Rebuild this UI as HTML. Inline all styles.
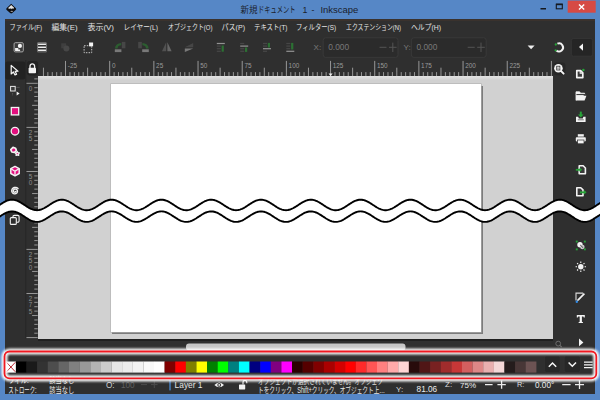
<!DOCTYPE html>
<html lang="ja"><head><meta charset="utf-8"><title>新規ドキュメント 1 - Inkscape</title>
<style>
html,body{margin:0;padding:0}
body{width:600px;height:400px;position:relative;overflow:hidden;background:#5687c6;font-family:"Liberation Sans",sans-serif}
#app{position:absolute;left:0;top:0;width:600px;height:400px;overflow:hidden}
#app>div{position:absolute}
#ov{position:absolute;left:0;top:0}
#ov text{font-family:"Liberation Sans",sans-serif}
#ov text.j{font-family:"Liberation Sans","Noto Sans CJK JP",sans-serif}
.t{position:absolute;color:transparent;white-space:nowrap;overflow:hidden;line-height:1;font-family:"Liberation Sans",sans-serif;user-select:none}
</style></head><body>
<div id="app">
<div style="left:5.2px;top:19.2px;width:589.6px;height:375.3px;background:#2f2f2f;"></div>
<div style="left:5.2px;top:19.2px;width:589.6px;height:1.6px;background:#3a322d;"></div>
<div style="left:37.7px;top:76.1px;width:515.3px;height:262.7px;background:#d1d1d1;"></div>
<div style="left:37.7px;top:338.8px;width:515.3px;height:1.8px;background:#1f1f1f;"></div>
<div style="left:37.7px;top:76.1px;width:515.3px;height:4px;background:linear-gradient(#e4e4e4,#d1d1d1);"></div>
<div style="left:112.4px;top:85.8px;width:370.4px;height:248.4px;background:#7c7c7c;filter:blur(0.7px);"></div>
<div style="left:110.7px;top:83.6px;width:370.3px;height:248.5px;background:#ffffff;box-shadow:0 0 0 0.6px #b0b0b0;"></div>
<span class="t" style="left:240px;top:5px;font-size:8.8px;width:119px">新規ドキュメント 1 - Inkscape</span>
<span class="t" style="left:9.5px;top:22.9px;font-size:7.5px;width:32.5px">ファイル(F)</span>
<span class="t" style="left:51.5px;top:22.9px;font-size:7.5px;width:26.0px">編集(E)</span>
<span class="t" style="left:87.5px;top:22.9px;font-size:7.5px;width:26.5px">表示(V)</span>
<span class="t" style="left:123.5px;top:22.9px;font-size:7.5px;width:34.5px">レイヤー(L)</span>
<span class="t" style="left:168.0px;top:22.9px;font-size:7.5px;width:44.5px">オブジェクト(O)</span>
<span class="t" style="left:221.5px;top:22.9px;font-size:7.5px;width:23.5px">パス(P)</span>
<span class="t" style="left:254.0px;top:22.9px;font-size:7.5px;width:33.5px">テキスト(T)</span>
<span class="t" style="left:296.0px;top:22.9px;font-size:7.5px;width:40.0px">フィルター(S)</span>
<span class="t" style="left:346.0px;top:22.9px;font-size:7.5px;width:55.0px">エクステンション(N)</span>
<span class="t" style="left:411.0px;top:22.9px;font-size:7.5px;width:30.0px">ヘルプ(H)</span>
<span class="t" style="left:8.6px;top:374.4px;font-size:8.4px;width:20.0px">フィル:</span>
<span class="t" style="left:49.2px;top:374.4px;font-size:8.4px;width:25.0px">該当なし</span>
<span class="t" style="left:8.2px;top:384.4px;font-size:8.4px;width:28.3px">ストローク:</span>
<span class="t" style="left:49.2px;top:384.4px;font-size:8.4px;width:25.0px">該当なし</span>
<span class="t" style="left:258.0px;top:375.5px;font-size:8.2px;width:125.0px">オブジェクトが選択されていません。オブジェク</span>
<span class="t" style="left:258.0px;top:384.5px;font-size:8.2px;width:127.0px">トをクリック、Shift+クリック、オブジェクト上…</span>
<svg id="ov" width="600" height="400" viewBox="0 0 600 400">
<defs><filter id="bl" x="-5%" y="-50%" width="110%" height="200%"><feGaussianBlur stdDeviation="0.85"/></filter></defs>
<g transform="translate(11.2 8.7) scale(0.9)"><path d="M0 -5.6 L5.2 -0.6 Q6 0.6 5 1.4 L1.2 4.8 Q0 5.8 -1.2 4.8 L-5 1.4 Q-6 0.6 -5.2 -0.6 Z" fill="#0e0e10"/><path d="M0 -4.2 L3.2 -1 L2.2 0.2 L1 -0.6 L0 0.6 L-1 -0.6 L-2.4 0.4 L-3.4 -0.8 Z" fill="#e4e4e4"/><ellipse cx="0.6" cy="3" rx="1.4" ry="0.6" fill="#cfcfcf" opacity="0.7"/></g>
<text class="j" x="240.5" y="13.2" font-size="8.8" fill="#1a212c" textLength="17" lengthAdjust="spacingAndGlyphs">新規</text>
<text class="j" x="258" y="13.2" font-size="8.8" fill="#1a212c" textLength="37.5" lengthAdjust="spacingAndGlyphs">ドキュメント</text>
<text class="j" x="302.6" y="13.2" font-size="8.8" fill="#1a212c">1</text>
<text class="j" x="311.6" y="13.2" font-size="8.8" fill="#1a212c">-</text>
<text class="j" x="320.4" y="13.2" font-size="8.8" fill="#1a212c" textLength="38" lengthAdjust="spacingAndGlyphs">Inkscape</text>
<rect x="540.5" y="8" width="5.5" height="1.5" fill="#15191f" />
<rect x="556.3" y="4.2" width="6" height="4.6" fill="none" stroke="#15191f" stroke-width="1.1"/><rect x="556" y="3.7" width="6.6" height="1.5" fill="#15191f"/>
<rect x="567.7" y="0.6" width="28" height="12.1" fill="#d64a44" />
<path d="M579 4.6 L584.2 9.6 M584.2 4.6 L579 9.6" stroke="#ffffff" stroke-width="1.4" fill="none"/>
<text class="j" x="9.5" y="30.4" font-size="7.5" fill="#e4e4e4" textLength="32.5" lengthAdjust="spacingAndGlyphs">ファイル(F)</text>
<text class="j" x="51.5" y="30.4" font-size="7.5" fill="#e4e4e4" textLength="26" lengthAdjust="spacingAndGlyphs">編集(E)</text>
<text class="j" x="87.5" y="30.4" font-size="7.5" fill="#e4e4e4" textLength="26.5" lengthAdjust="spacingAndGlyphs">表示(V)</text>
<text class="j" x="123.5" y="30.4" font-size="7.5" fill="#e4e4e4" textLength="34.5" lengthAdjust="spacingAndGlyphs">レイヤー(L)</text>
<text class="j" x="168" y="30.4" font-size="7.5" fill="#e4e4e4" textLength="44.5" lengthAdjust="spacingAndGlyphs">オブジェクト(O)</text>
<text class="j" x="221.5" y="30.4" font-size="7.5" fill="#e4e4e4" textLength="23.5" lengthAdjust="spacingAndGlyphs">パス(P)</text>
<text class="j" x="254" y="30.4" font-size="7.5" fill="#e4e4e4" textLength="33.5" lengthAdjust="spacingAndGlyphs">テキスト(T)</text>
<text class="j" x="296" y="30.4" font-size="7.5" fill="#e4e4e4" textLength="40" lengthAdjust="spacingAndGlyphs">フィルター(S)</text>
<text class="j" x="346" y="30.4" font-size="7.5" fill="#e4e4e4" textLength="55" lengthAdjust="spacingAndGlyphs">エクステンション(N)</text>
<text class="j" x="411" y="30.4" font-size="7.5" fill="#e4e4e4" textLength="30" lengthAdjust="spacingAndGlyphs">ヘルプ(H)</text>
<g transform="translate(18.7 47.3)"><rect x="-4.6" y="-4.6" width="9.2" height="9.2" rx="1.2" fill="#3a3a3a" stroke="#a8a8a8" stroke-width="1"/><circle cx="1.2" cy="-1.4" r="2.1" fill="#f4f4f4"/><path d="M-3.6 0.6h3.2v1.6h1.8v1.6h-5z" fill="#f0f0f0"/></g>
<g transform="translate(42 47.3)"><path d="M-4 -3H4M-4 0H4M-4 3H4" stroke="#ededed" stroke-width="1.5"/><path d="M-4.4 -4.4V4.4M4.4 -4.4V4.4M-4.4 -4.6H4.4M-4.4 4.6H4.4" stroke="#8a8a8a" stroke-width="0.8" fill="none"/></g>
<g transform="translate(65.2 47.3)"><rect x="-4" y="-4" width="5" height="5" fill="#3f3f3f"/><circle cx="1.2" cy="1.2" r="3" fill="#474747"/></g>
<g transform="translate(88.3 47.3)"><rect x="-4.2" y="-1.6" width="7.6" height="7" fill="none" stroke="#d6d6d6" stroke-width="0.9" stroke-dasharray="1.5 1.2"/><rect x="0.8" y="-4.8" width="4" height="3.8" fill="#f4f4f4"/></g>
<g transform="translate(120 47.3)" opacity="0.78"><path d="M1.2 -4.4 V-2 A3.6 3.4 0 0 0 -2.4 1.2 H-5 A6.2 5.6 0 0 1 1.2 -4.4Z" fill="#2c6b31"/><rect x="1.8" y="-5.4" width="3.6" height="6.4" fill="#4e4e4e"/><rect x="-5.2" y="2" width="6.6" height="2.8" fill="#8e8e8e"/></g>
<g transform="translate(143.6 47.3)" opacity="0.78"><path d="M-1.2 -4.4 V-2 A3.6 3.4 0 0 1 2.4 1.2 H5 A6.2 5.6 0 0 0 -1.2 -4.4Z" fill="#2c6b31"/><rect x="-5.4" y="-5.4" width="3.6" height="6.4" fill="#4e4e4e"/><rect x="-1.4" y="2" width="6.6" height="2.8" fill="#8e8e8e"/></g>
<g transform="translate(166.8 47.3)" opacity="0.8"><path d="M-0.6 -5 V4 H-4.8 Z" fill="#5a5a5a"/><path d="M0.6 -5 V4 H4.8 Z" fill="#747474"/></g>
<g transform="translate(189.6 47.6)" opacity="0.8"><path d="M-4.8 -0.4 H3.6 V-4.6 Z" fill="#4c4c4c"/><path d="M-4.8 0.8 H3.6 L-4.8 4.4 Z" fill="#8c8c8c"/></g>
<g transform="translate(220.8 47.3)" opacity="0.72"><rect x="-4" y="-4.3999999999999995" width="8" height="1.2" fill="#b8b8b8"/><rect x="-4" y="-1.7999999999999998" width="4" height="1.2" fill="#505050"/><rect x="-4" y="0.7999999999999999" width="4" height="1.2" fill="#505050"/><rect x="-4" y="3.4" width="4" height="1.2" fill="#505050"/><rect x="0.8" y="-1.8" width="2.2" height="6.2" fill="#2b8a35"/></g>
<g transform="translate(244.2 47.3)" opacity="0.72"><rect x="-4" y="-4.3999999999999995" width="4" height="1.2" fill="#505050"/><rect x="-4" y="-1.7999999999999998" width="8" height="1.2" fill="#b8b8b8"/><rect x="-4" y="0.7999999999999999" width="4" height="1.2" fill="#505050"/><rect x="-4" y="3.4" width="4" height="1.2" fill="#505050"/><rect x="0.8" y="0.2" width="2.2" height="4.4" fill="#2b8a35"/></g>
<g transform="translate(267 47.3)" opacity="0.72"><rect x="-4" y="-4.3999999999999995" width="4" height="1.2" fill="#505050"/><rect x="-4" y="-1.7999999999999998" width="4" height="1.2" fill="#505050"/><rect x="-4" y="0.7999999999999999" width="8" height="1.2" fill="#b8b8b8"/><rect x="-4" y="3.4" width="4" height="1.2" fill="#505050"/><rect x="0.8" y="-4.4" width="2.2" height="4.6" fill="#2b8a35"/></g>
<g transform="translate(290.3 47.3)" opacity="0.72"><rect x="-4" y="-4.3999999999999995" width="4" height="1.2" fill="#505050"/><rect x="-4" y="-1.7999999999999998" width="4" height="1.2" fill="#505050"/><rect x="-4" y="0.7999999999999999" width="4" height="1.2" fill="#505050"/><rect x="-4" y="3.4" width="8" height="1.2" fill="#b8b8b8"/><rect x="0.8" y="-4.4" width="2.2" height="6.6" fill="#2b8a35"/></g>
<text x="313.6" y="50" font-size="8" fill="#7a7a7a" font-weight="normal" text-anchor="start">X:</text>
<rect x="323.2" y="37.8" width="74.8" height="19.6" rx="2.5" fill="#2b2b2b" stroke="#3c3c3c" stroke-width="0.8"/>
<text x="328.2" y="50.2" font-size="8.4" fill="#787878" font-weight="normal" text-anchor="start">0.000</text>
<path d="M379.5 47.3h7M389.0 47.3h7.6M392.8 42.6v9.4" stroke="#545454" stroke-width="1" fill="none"/>
<text x="403.5" y="50" font-size="8" fill="#7a7a7a" font-weight="normal" text-anchor="start">Y:</text>
<rect x="411.4" y="37.8" width="74.8" height="19.6" rx="2.5" fill="#2b2b2b" stroke="#3c3c3c" stroke-width="0.8"/>
<text x="416.4" y="50.2" font-size="8.4" fill="#787878" font-weight="normal" text-anchor="start">0.000</text>
<path d="M467.7 47.3h7M477.2 47.3h7.6M481.0 42.6v9.4" stroke="#545454" stroke-width="1" fill="none"/>
<path d="M527.6 45.4h7l-3.5 3.8z" fill="#f0f0f0"/>
<g transform="translate(559 47.4)"><path d="M-1.6 -3.7 A4 4 0 1 1 -2.6 3" fill="none" stroke="#f2f2f2" stroke-width="2"/><circle cx="-3.2" cy="-2.9" r="1.15" fill="#27a338"/><circle cx="-3.4" cy="2.9" r="1.15" fill="#27a338"/></g>
<rect x="571.3" y="38.6" width="21.4" height="17.6" rx="2" fill="#252525" stroke="#3a3a3a" stroke-width="0.7"/><path d="M583 43.4v7.4l-4-3.7z" fill="#f4f4f4"/>
<path d="M43.45 67.7V76.1M47.86 72.1V76.1M52.28 72.1V76.1M56.70 72.1V76.1M61.11 72.1V76.1M65.53 60.9V76.1M69.95 72.1V76.1M74.36 72.1V76.1M78.78 72.1V76.1M83.20 72.1V76.1M87.62 67.7V76.1M92.03 72.1V76.1M96.45 72.1V76.1M100.87 72.1V76.1M105.28 72.1V76.1M109.70 60.9V76.1M114.12 72.1V76.1M118.53 72.1V76.1M122.95 72.1V76.1M127.37 72.1V76.1M131.78 67.7V76.1M136.20 72.1V76.1M140.62 72.1V76.1M145.04 72.1V76.1M149.45 72.1V76.1M153.87 60.9V76.1M158.29 72.1V76.1M162.70 72.1V76.1M167.12 72.1V76.1M171.54 72.1V76.1M175.95 67.7V76.1M180.37 72.1V76.1M184.79 72.1V76.1M189.21 72.1V76.1M193.62 72.1V76.1M198.04 60.9V76.1M202.46 72.1V76.1M206.87 72.1V76.1M211.29 72.1V76.1M215.71 72.1V76.1M220.12 67.7V76.1M224.54 72.1V76.1M228.96 72.1V76.1M233.38 72.1V76.1M237.79 72.1V76.1M242.21 60.9V76.1M246.63 72.1V76.1M251.04 72.1V76.1M255.46 72.1V76.1M259.88 72.1V76.1M264.30 67.7V76.1M268.71 72.1V76.1M273.13 72.1V76.1M277.55 72.1V76.1M281.96 72.1V76.1M286.38 60.9V76.1M290.80 72.1V76.1M295.21 72.1V76.1M299.63 72.1V76.1M304.05 72.1V76.1M308.46 67.7V76.1M312.88 72.1V76.1M317.30 72.1V76.1M321.72 72.1V76.1M326.13 72.1V76.1M330.55 60.9V76.1M334.97 72.1V76.1M339.38 72.1V76.1M343.80 72.1V76.1M348.22 72.1V76.1M352.63 67.7V76.1M357.05 72.1V76.1M361.47 72.1V76.1M365.89 72.1V76.1M370.30 72.1V76.1M374.72 60.9V76.1M379.14 72.1V76.1M383.55 72.1V76.1M387.97 72.1V76.1M392.39 72.1V76.1M396.80 67.7V76.1M401.22 72.1V76.1M405.64 72.1V76.1M410.06 72.1V76.1M414.47 72.1V76.1M418.89 60.9V76.1M423.31 72.1V76.1M427.72 72.1V76.1M432.14 72.1V76.1M436.56 72.1V76.1M440.97 67.7V76.1M445.39 72.1V76.1M449.81 72.1V76.1M454.23 72.1V76.1M458.64 72.1V76.1M463.06 60.9V76.1M467.48 72.1V76.1M471.89 72.1V76.1M476.31 72.1V76.1M480.73 72.1V76.1M485.14 67.7V76.1M489.56 72.1V76.1M493.98 72.1V76.1M498.40 72.1V76.1M502.81 72.1V76.1M507.23 60.9V76.1M511.65 72.1V76.1M516.06 72.1V76.1M520.48 72.1V76.1M524.90 72.1V76.1M529.32 67.7V76.1M533.73 72.1V76.1M538.15 72.1V76.1M542.57 72.1V76.1M546.98 72.1V76.1M551.40 60.9V76.1" stroke="#c4c4c4" stroke-width="0.7" fill="none"/>
<path d="M328.6 73.6h4l-2 2.6z" fill="#f0f0f0"/>
<text x="67.75" y="67.9" font-size="6.4" fill="#9a9a9a" font-weight="normal" text-anchor="start">-25</text>
<text x="111.92" y="67.9" font-size="6.4" fill="#9a9a9a" font-weight="normal" text-anchor="start">0</text>
<text x="156.08999999999997" y="67.9" font-size="6.4" fill="#9a9a9a" font-weight="normal" text-anchor="start">25</text>
<text x="200.26" y="67.9" font-size="6.4" fill="#9a9a9a" font-weight="normal" text-anchor="start">50</text>
<text x="244.43" y="67.9" font-size="6.4" fill="#9a9a9a" font-weight="normal" text-anchor="start">75</text>
<text x="288.6" y="67.9" font-size="6.4" fill="#9a9a9a" font-weight="normal" text-anchor="start">100</text>
<text x="332.77" y="67.9" font-size="6.4" fill="#9a9a9a" font-weight="normal" text-anchor="start">125</text>
<text x="376.94" y="67.9" font-size="6.4" fill="#9a9a9a" font-weight="normal" text-anchor="start">150</text>
<text x="421.11" y="67.9" font-size="6.4" fill="#9a9a9a" font-weight="normal" text-anchor="start">175</text>
<text x="465.28000000000003" y="67.9" font-size="6.4" fill="#9a9a9a" font-weight="normal" text-anchor="start">200</text>
<text x="509.45000000000005" y="67.9" font-size="6.4" fill="#9a9a9a" font-weight="normal" text-anchor="start">225</text>
<path d="M34.3 78.89H37.7M26.3 83.30H37.7M34.3 87.71H37.7M34.3 92.12H37.7M34.3 96.53H37.7M34.3 100.94H37.7M32.1 105.35H37.7M34.3 109.76H37.7M34.3 114.17H37.7M34.3 118.58H37.7M34.3 122.99H37.7M26.3 127.40H37.7M34.3 131.81H37.7M34.3 136.22H37.7M34.3 140.63H37.7M34.3 145.04H37.7M32.1 149.45H37.7M34.3 153.86H37.7M34.3 158.27H37.7M34.3 162.68H37.7M34.3 167.09H37.7M26.3 171.50H37.7M34.3 175.91H37.7M34.3 180.32H37.7M34.3 184.73H37.7M34.3 189.14H37.7M32.1 193.55H37.7M34.3 197.96H37.7M34.3 202.37H37.7M34.3 206.78H37.7M34.3 222.94H37.7M32.1 227.35H37.7M34.3 231.76H37.7M34.3 236.17H37.7M34.3 240.58H37.7M34.3 244.99H37.7M26.3 249.40H37.7M34.3 253.81H37.7M34.3 258.22H37.7M34.3 262.63H37.7M34.3 267.04H37.7M32.1 271.45H37.7M34.3 275.86H37.7M34.3 280.27H37.7M34.3 284.68H37.7M34.3 289.09H37.7M26.3 293.50H37.7M34.3 297.91H37.7M34.3 302.32H37.7M34.3 306.73H37.7M34.3 311.14H37.7M32.1 315.55H37.7M34.3 319.96H37.7M34.3 324.37H37.7M34.3 328.78H37.7M34.3 333.19H37.7M26.3 337.60H37.7" stroke="#c4c4c4" stroke-width="0.7" fill="none"/>
<text x="30.5" y="90.7" text-anchor="middle" font-size="6.3" fill="#8e8e8e">0</text>
<text x="30.5" y="134.8" text-anchor="middle" font-size="6.3" fill="#8e8e8e">2</text>
<text x="30.5" y="141.2" text-anchor="middle" font-size="6.3" fill="#8e8e8e">5</text>
<text x="30.5" y="178.9" text-anchor="middle" font-size="6.3" fill="#8e8e8e">5</text>
<text x="30.5" y="185.3" text-anchor="middle" font-size="6.3" fill="#8e8e8e">0</text>
<text x="30.5" y="256.8" text-anchor="middle" font-size="6.3" fill="#8e8e8e">2</text>
<text x="30.5" y="263.2" text-anchor="middle" font-size="6.3" fill="#8e8e8e">5</text>
<text x="30.5" y="269.6" text-anchor="middle" font-size="6.3" fill="#8e8e8e">0</text>
<text x="30.5" y="300.9" text-anchor="middle" font-size="6.3" fill="#8e8e8e">2</text>
<text x="30.5" y="307.3" text-anchor="middle" font-size="6.3" fill="#8e8e8e">7</text>
<text x="30.5" y="313.7" text-anchor="middle" font-size="6.3" fill="#8e8e8e">5</text>
<rect x="25.3" y="60" width="0.9" height="278.5" fill="#262626" />
<rect x="26.8" y="61" width="11.4" height="14.6" rx="3" fill="#232323"/>
<g transform="translate(32.3 68.6)"><path d="M-2.3 -0.6V-2.4A2.3 2.4 0 0 1 2.3 -2.4V-0.6" fill="none" stroke="#f4f4f4" stroke-width="1.3"/><rect x="-3.7" y="-0.8" width="7.4" height="5.4" rx="0.8" fill="#f4f4f4"/></g>
<rect x="553.4" y="62.6" width="12" height="12.6" rx="3" fill="#262626"/>
<g transform="translate(558.4 68.2)"><circle cx="0" cy="0" r="4.3" fill="#f4f4f4"/><path d="M3 3.2L5.2 5.4" stroke="#f4f4f4" stroke-width="2" stroke-linecap="round"/><rect x="-1.7" y="-2" width="3.2" height="3.8" fill="none" stroke="#2a2a2a" stroke-width="0.75"/><path d="M-0.4 -0.8V1" stroke="#2a2a2a" stroke-width="0.6"/></g>
<rect x="5.4" y="61.6" width="19.8" height="18" rx="2" fill="#222222"/>
<g transform="translate(14.2 70)"><path d="M-3 -4.6 L-3 4 L-0.8 2 L0.8 5 L2.4 4.2 L1 1.4 L3.8 1.2 Z" fill="#232323" stroke="#f6f6f6" stroke-width="1.2" stroke-linejoin="round"/></g>
<g transform="translate(13.6 90)"><rect x="-3" y="-3.6" width="4.6" height="4.6" fill="#3a3a3a" stroke="#eaeaea" stroke-width="1"/><path d="M3 1.4v4l3-2z" fill="#f0f0f0"/><path d="M3 -2.6h3M-1 3.4v2" stroke="#8a8a8a" stroke-width="0.7" stroke-dasharray="1 0.8"/></g>
<g transform="translate(15 111.2)"><rect x="-3.7" y="-3.7" width="7.4" height="7.4" fill="#e3107f" stroke="#f4f4f4" stroke-width="1.3"/></g>
<g transform="translate(15 131.2)"><circle r="3.8" fill="#e3107f" stroke="#f4f4f4" stroke-width="1.3"/></g>
<g transform="translate(14.6 151.2)"><path d="M-1.6 -3.8 L1 -3 L1.8 -0.6 L-0.2 1.2 L-2.8 0.8 L-3.8 -1.6 Z" fill="#e3107f" stroke="#f4f4f4" stroke-width="1.7" stroke-linejoin="round"/><path d="M2.6 0.4 L3.4 1.5 L4.8 1.7 L3.9 2.8 L4.1 4.1 L2.8 3.6 L1.5 4.2 L1.6 2.8 L0.8 1.8 L2 1.5 Z" fill="#e3107f" stroke="#f4f4f4" stroke-width="1.3" stroke-linejoin="round"/></g>
<g transform="translate(15 171)"><path d="M0 -4.6 L4.2 -2.3 V2.5 L0 4.8 L-4.2 2.5 V-2.3 Z" fill="#e3107f" stroke="#f4f4f4" stroke-width="1.5" stroke-linejoin="round"/><path d="M0 4.6V0.2L4 -2.2M0 0.2L-4 -2.2" fill="none" stroke="#f4f4f4" stroke-width="1.3"/></g>
<g transform="translate(15 191)"><path d="M0.74 0.51 L0.70 0.62 L0.64 0.73 L0.56 0.83 L0.47 0.92 L0.36 1.00 L0.24 1.07 L0.10 1.13 L-0.04 1.17 L-0.19 1.18 L-0.35 1.18 L-0.51 1.16 L-0.67 1.12 L-0.82 1.05 L-0.97 0.96 L-1.11 0.85 L-1.24 0.73 L-1.35 0.58 L-1.44 0.41 L-1.52 0.24 L-1.57 0.04 L-1.59 -0.16 L-1.59 -0.36 L-1.57 -0.57 L-1.51 -0.78 L-1.43 -0.98 L-1.32 -1.17 L-1.19 -1.35 L-1.03 -1.52 L-0.84 -1.67 L-0.64 -1.79 L-0.42 -1.89 L-0.18 -1.96 L0.07 -2.00 L0.32 -2.01 L0.58 -1.98 L0.84 -1.92 L1.09 -1.83 L1.33 -1.71 L1.56 -1.55 L1.77 -1.36 L1.95 -1.15 L2.11 -0.91 L2.24 -0.64 L2.34 -0.36 L2.40 -0.07 L2.42 0.24 L2.41 0.55 L2.35 0.85 L2.25 1.16 L2.12 1.45 L1.94 1.73 L1.74 1.98 L1.49 2.21 L1.22 2.41 L0.92 2.57 L0.60 2.70 L0.25 2.79 L-0.10 2.83 L-0.46 2.83 L-0.82 2.78 L-1.17 2.69 L-1.52 2.55 L-1.85 2.36 L-2.15 2.14 L-2.43 1.87 L-2.67 1.57 L-2.88 1.24 L-3.04 0.87 L-3.16 0.49 L-3.23 0.09 L-3.25 -0.32 L-3.22 -0.73 L-3.13 -1.14 L-2.99 -1.54 L-2.81 -1.92 L-2.57 -2.28 L-2.28 -2.61 L-1.96 -2.90 L-1.59 -3.15 L-1.20 -3.36 L-0.77 -3.52 L-0.33 -3.62 L0.13 -3.66 L0.59 -3.65 L1.05 -3.58 L1.51 -3.45 L1.94 -3.26 L2.36 -3.02 L2.74 -2.73 L3.09 -2.38" fill="none" stroke="#f2f2f2" stroke-width="1.4" stroke-linecap="round"/></g>
<g transform="translate(14.5 219.6)"><rect x="-1.6" y="-4.2" width="6.2" height="6.8" rx="1.4" fill="none" stroke="#f2f2f2" stroke-width="1.1"/><rect x="-4.2" y="-2" width="6" height="6.8" rx="1" fill="#2f2f2f" stroke="#f2f2f2" stroke-width="1.1"/></g>
<g transform="translate(579.8 74)"><path d="M-3 -3.4 H0.8 L3 -1.2 V3.6 H-3 Z" fill="#3a3a3a" stroke="#f3f3f3" stroke-width="1.7" stroke-linejoin="round"/><path d="M0.4 -3.4V-0.8H3" fill="none" stroke="#f3f3f3" stroke-width="1.1"/><circle cx="3.6" cy="-4" r="1.25" fill="#27a338"/></g>
<g transform="translate(580.8 96)"><path d="M-4.8 4.4 V-4.2 H-1.2 L-0.2 -2.8 H3.8 V-1" fill="#f3f3f3" stroke="#f3f3f3" stroke-width="0.8" stroke-linejoin="round"/><path d="M-4.4 -1.4H4.2" stroke="#2f2f2f" stroke-width="1"/><path d="M-4.8 4.6 L-3 -0.2 H5.6 L3.8 4.6 Z" fill="#f3f3f3"/></g>
<g transform="translate(580.8 117.2)"><path d="M0 -5.6 V-1.6" stroke="#27a338" stroke-width="2" fill="none"/><path d="M-2.8 -2.6 H2.8 L0 0.4Z" fill="#27a338"/><path d="M-4.8 -0.4 H-2.6 L-2 1.4 H2 L2.6 -0.4 H4.8 V4.8 H-4.8 Z" fill="#f3f3f3"/><path d="M-3 2.6H3" stroke="#555" stroke-width="0.8"/></g>
<g transform="translate(580.8 139)"><rect x="-3" y="-4.8" width="6" height="2.4" fill="#f3f3f3"/><rect x="-5" y="-1.8" width="10" height="4.2" rx="0.8" fill="#f3f3f3"/><rect x="-3.2" y="1" width="6.4" height="3.8" fill="#f3f3f3" stroke="#2f2f2f" stroke-width="0.7"/></g>
<g transform="translate(582.2 169.8)"><path d="M-3 -4 H1 L3.2 -1.8 V4 H-3 Z" fill="#3a3a3a" stroke="#f3f3f3" stroke-width="1.6" stroke-linejoin="round"/><path d="M-6.4 0 H-1.6" stroke="#27a338" stroke-width="1.8"/><path d="M-2.6 -2.2 L0 0 L-2.6 2.2Z" fill="#27a338"/></g>
<g transform="translate(579.8 191.7)"><path d="M-3 -4 H1 L3.2 -1.8 V4 H-3 Z" fill="#3a3a3a" stroke="#f3f3f3" stroke-width="1.6" stroke-linejoin="round"/><path d="M0.2 0.6 H5" stroke="#27a338" stroke-width="1.8"/><path d="M4 -1.6 L6.8 0.6 L4 2.8Z" fill="#27a338"/></g>
<g transform="translate(580.8 245.4)"><circle cx="-0.8" cy="-0.6" r="2.7" fill="#f3f3f3"/><circle cx="1.6" cy="1.6" r="2.2" fill="#c8c8c8"/><path d="M-0.6 -0.4L2.4 2.4" stroke="#2f2f2f" stroke-width="0.8"/><g fill="#27a338"><rect x="-5" y="-4.8" width="1.9" height="1.9"/><rect x="3.1" y="-4.8" width="1.9" height="1.9"/><rect x="-5" y="3" width="1.9" height="1.9"/><rect x="3.1" y="3" width="1.9" height="1.9"/></g></g>
<g transform="translate(580.8 266.8)"><circle r="2.7" fill="#f3f3f3"/><path d="M0 -5.2V-3.8M0 5.2V3.8M-5.2 0H-3.8M5.2 0H3.8M-3.7 -3.7L-2.7 -2.7M3.7 3.7L2.7 2.7M-3.7 3.7L-2.7 2.7M3.7 -3.7L2.7 -2.7" stroke="#f3f3f3" stroke-width="1.1"/></g>
<g transform="translate(580.2 297.5)"><path d="M3 -4.4 H-4.2 V3" fill="none" stroke="#dcdcdc" stroke-width="1.1"/><path d="M4.8 -3.2 L-1.4 3 L-3.2 3.8 L-2.6 1.8 L3.6 -4.4 Z" fill="#f3f3f3"/><circle cx="-3.4" cy="4.2" r="1.2" fill="#2f8ae6"/></g>
<g transform="translate(580.8 319)"><path d="M-4 -4 H4 V-1.6 H3 L2.6 -2.6 H1.1 V2.8 L2.2 3.2 V4 H-2.2 V3.2 L-1.1 2.8 V-2.6 H-2.6 L-3 -1.6 H-4 Z" fill="#f3f3f3"/></g>
<path d="M579 338.6 v7.6 l4.4 -3.8z" fill="#f4f4f4"/>
<g transform="translate(558.6 344)"><circle cx="-0.4" cy="-0.4" r="2.4" fill="none" stroke="#6c6c6c" stroke-width="1"/><path d="M1.4 1.4L3 3" stroke="#6c6c6c" stroke-width="1.1"/></g>
<rect x="186" y="343.6" width="219.5" height="7" rx="3" fill="#c6c6c6"/>
<rect x="5.30" y="361.5" width="10.62" height="11.1" fill="#ffffff" />
<path d="M6.50 362.3L15.32 371.8M15.32 362.3L6.50 371.8" stroke="#b0101a" stroke-width="0.9"/>
<rect x="15.92" y="361.5" width="10.72" height="11.1" fill="#000000" />
<rect x="26.54" y="361.5" width="10.72" height="11.1" fill="#1a1a1a" />
<rect x="37.16" y="361.5" width="10.72" height="11.1" fill="#333333" />
<rect x="47.78" y="361.5" width="10.72" height="11.1" fill="#4d4d4d" />
<rect x="58.40" y="361.5" width="10.72" height="11.1" fill="#666666" />
<rect x="69.02" y="361.5" width="10.72" height="11.1" fill="#808080" />
<rect x="79.64" y="361.5" width="10.72" height="11.1" fill="#999999" />
<rect x="90.26" y="361.5" width="10.72" height="11.1" fill="#b3b3b3" />
<rect x="100.88" y="361.5" width="10.72" height="11.1" fill="#cccccc" />
<rect x="111.50" y="361.5" width="10.72" height="11.1" fill="#e6e6e6" />
<rect x="122.12" y="361.5" width="10.72" height="11.1" fill="#ececec" />
<rect x="132.74" y="361.5" width="10.72" height="11.1" fill="#f2f2f2" />
<rect x="143.36" y="361.5" width="10.72" height="11.1" fill="#f9f9f9" />
<rect x="153.98" y="361.5" width="10.72" height="11.1" fill="#ffffff" />
<rect x="164.60" y="361.5" width="10.72" height="11.1" fill="#800000" />
<rect x="175.22" y="361.5" width="10.72" height="11.1" fill="#ff0000" />
<rect x="185.84" y="361.5" width="10.72" height="11.1" fill="#808000" />
<rect x="196.46" y="361.5" width="10.72" height="11.1" fill="#ffff00" />
<rect x="207.08" y="361.5" width="10.72" height="11.1" fill="#008000" />
<rect x="217.70" y="361.5" width="10.72" height="11.1" fill="#00ff00" />
<rect x="228.32" y="361.5" width="10.72" height="11.1" fill="#008080" />
<rect x="238.94" y="361.5" width="10.72" height="11.1" fill="#00ffff" />
<rect x="249.56" y="361.5" width="10.72" height="11.1" fill="#000080" />
<rect x="260.18" y="361.5" width="10.72" height="11.1" fill="#0000ff" />
<rect x="270.80" y="361.5" width="10.72" height="11.1" fill="#800080" />
<rect x="281.42" y="361.5" width="10.72" height="11.1" fill="#ff00ff" />
<rect x="292.04" y="361.5" width="10.72" height="11.1" fill="#2b0000" />
<rect x="302.66" y="361.5" width="10.72" height="11.1" fill="#550000" />
<rect x="313.28" y="361.5" width="10.72" height="11.1" fill="#800000" />
<rect x="323.90" y="361.5" width="10.72" height="11.1" fill="#aa0000" />
<rect x="334.52" y="361.5" width="10.72" height="11.1" fill="#d40000" />
<rect x="345.14" y="361.5" width="10.72" height="11.1" fill="#ff0000" />
<rect x="355.76" y="361.5" width="10.72" height="11.1" fill="#ff2a2a" />
<rect x="366.38" y="361.5" width="10.72" height="11.1" fill="#ff5555" />
<rect x="377.00" y="361.5" width="10.72" height="11.1" fill="#ff8080" />
<rect x="387.62" y="361.5" width="10.72" height="11.1" fill="#ffaaaa" />
<rect x="398.24" y="361.5" width="10.72" height="11.1" fill="#ffd5d5" />
<rect x="408.86" y="361.5" width="10.72" height="11.1" fill="#280b0b" />
<rect x="419.48" y="361.5" width="10.72" height="11.1" fill="#501616" />
<rect x="430.10" y="361.5" width="10.72" height="11.1" fill="#782121" />
<rect x="440.72" y="361.5" width="10.72" height="11.1" fill="#a02c2c" />
<rect x="451.34" y="361.5" width="10.72" height="11.1" fill="#c83737" />
<rect x="461.96" y="361.5" width="10.72" height="11.1" fill="#d35f5f" />
<rect x="472.58" y="361.5" width="10.72" height="11.1" fill="#de8787" />
<rect x="483.20" y="361.5" width="10.72" height="11.1" fill="#e9afaf" />
<rect x="493.82" y="361.5" width="10.72" height="11.1" fill="#f4d7d7" />
<rect x="504.44" y="361.5" width="10.72" height="11.1" fill="#241c1c" />
<rect x="515.06" y="361.5" width="10.72" height="11.1" fill="#483737" />
<rect x="525.68" y="361.5" width="10.72" height="11.1" fill="#6c5353" />
<rect x="544.4" y="355.8" width="15.8" height="16.6" rx="2" fill="#272727" stroke="#383838" stroke-width="0.6"/><path d="M548.8 366.8l3.7-3.8l3.7 3.8" fill="none" stroke="#f6f6f6" stroke-width="1.5"/>
<rect x="564.2" y="355.8" width="16.2" height="16.6" rx="2" fill="#272727" stroke="#383838" stroke-width="0.6"/><path d="M568.6 362.4l3.7 3.8l3.7-3.8" fill="none" stroke="#f6f6f6" stroke-width="1.5"/>
<path d="M584 362.2h8.6M584 364.9h8.6M584 367.6h8.6" stroke="#f6f6f6" stroke-width="1.3"/>
<text class="j" x="8.6" y="382.8" font-size="8.4" fill="#e8e8e8" textLength="20" lengthAdjust="spacingAndGlyphs">フィル:</text>
<text class="j" x="49.2" y="382.8" font-size="8.4" fill="#e8e8e8" textLength="25" lengthAdjust="spacingAndGlyphs">該当なし</text>
<text class="j" x="8.2" y="392.8" font-size="8.4" fill="#ececec" textLength="28.3" lengthAdjust="spacingAndGlyphs">ストローク:</text>
<text class="j" x="49.2" y="392.8" font-size="8.4" fill="#ececec" textLength="25" lengthAdjust="spacingAndGlyphs">該当なし</text>
<text x="106" y="387.6" font-size="8.2" fill="#cfcfcf" font-weight="normal" text-anchor="start">O:</text>
<text x="121" y="387.6" font-size="8.2" fill="#606060" font-weight="normal" text-anchor="start">100</text>
<path d="M141 384.6h6M151 384.6h6.6M154.3 381.2v6.8" stroke="#4c4c4c" stroke-width="1" fill="none"/>
<rect x="169.4" y="380" width="1.2" height="10.4" fill="#4a90e2" />
<text x="174.6" y="387.8" font-size="8.4" fill="#e4e4e4" font-weight="normal" text-anchor="start">Layer 1</text>
<g transform="translate(219.2 384.9)"><path d="M-4.8 0 Q0 -5 4.8 0 Q0 4.6 -4.8 0Z" fill="#f4f4f4"/><circle r="1.9" fill="#2f2f2f"/><circle r="0.9" fill="#f4f4f4"/></g>
<g transform="translate(242.4 385.4)"><path d="M0.6 -1 V-3 A1.9 2 0 0 1 4.4 -3 V-2.2" fill="none" stroke="#f2f2f2" stroke-width="1.1"/><rect x="-3.4" y="-1" width="6.2" height="5" rx="0.6" fill="#f2f2f2"/></g>
<text class="j" x="258" y="383.7" font-size="8.2" fill="#e0e0e0" textLength="125" lengthAdjust="spacingAndGlyphs">オブジェクトが選択されていません。オブジェク</text>
<text class="j" x="258" y="392.7" font-size="8.2" fill="#e6e6e6" textLength="127" lengthAdjust="spacingAndGlyphs">トをクリック、Shift+クリック、オブジェクト上…</text>
<text x="396" y="392" font-size="8" fill="#dcdcdc" font-weight="normal" text-anchor="start">Y:</text>
<text x="416.6" y="392.2" font-size="8.2" fill="#ececec" font-weight="normal" text-anchor="start">81.06</text>
<text x="445" y="387.4" font-size="8" fill="#dcdcdc" font-weight="normal" text-anchor="start">Z:</text>
<text x="460" y="388" font-size="8" fill="#ececec" font-weight="normal" text-anchor="start">75%</text>
<path d="M485 384.6h7.6M497.4 384.6h8.4M501.6 380.4v8.4" stroke="#ececec" stroke-width="1.3" fill="none"/>
<text x="517" y="387.4" font-size="7.4" fill="#dcdcdc" font-weight="normal" text-anchor="start">R:</text>
<text x="535" y="388" font-size="8.2" fill="#ececec" font-weight="normal" text-anchor="start">0.00°</text>
<path d="M562.2 384.6h8.4M575 384.6h9M579.5 380.2v8.8" stroke="#ececec" stroke-width="1.3" fill="none"/>
<rect x="4.5" y="351.5" width="591.8" height="26.9" rx="5" fill="none" stroke="#ffffff" stroke-width="6.2" opacity="0.95" filter="url(#bl)"/>
<rect x="4.5" y="351.5" width="591.8" height="26.9" rx="5" fill="none" stroke="#f01820" stroke-width="1.8"/>
<path d="M-3.0 206.61 L-2.0 205.97 L-1.0 205.31 L0.0 204.65 L1.0 203.99 L2.0 203.35 L3.0 202.74 L4.0 202.15 L5.0 201.62 L6.0 201.13 L7.0 200.71 L8.0 200.35 L9.0 200.07 L10.0 199.87 L11.0 199.74 L12.0 199.70 L13.0 199.74 L14.0 199.87 L15.0 200.07 L16.0 200.35 L17.0 200.71 L18.0 201.13 L19.0 201.62 L20.0 202.15 L21.0 202.74 L22.0 203.35 L23.0 203.99 L24.0 204.65 L25.0 205.31 L26.0 205.97 L27.0 206.61 L28.0 207.22 L29.0 207.80 L30.0 208.33 L31.0 208.81 L32.0 209.23 L33.0 209.58 L34.0 209.85 L35.0 210.05 L36.0 210.17 L37.0 210.20 L38.0 210.15 L39.0 210.02 L40.0 209.80 L41.0 209.51 L42.0 209.15 L43.0 208.72 L44.0 208.23 L45.0 207.69 L46.0 207.10 L47.0 206.48 L48.0 205.84 L49.0 205.18 L50.0 204.52 L51.0 203.86 L52.0 203.23 L53.0 202.62 L54.0 202.04 L55.0 201.52 L56.0 201.04 L57.0 200.63 L58.0 200.29 L59.0 200.02 L60.0 199.83 L61.0 199.73 L62.0 199.70 L63.0 199.76 L64.0 199.90 L65.0 200.12 L66.0 200.42 L67.0 200.79 L68.0 201.23 L69.0 201.72 L70.0 202.27 L71.0 202.86 L72.0 203.48 L73.0 204.13 L74.0 204.78 L75.0 205.45 L76.0 206.10 L77.0 206.74 L78.0 207.34 L79.0 207.91 L80.0 208.43 L81.0 208.90 L82.0 209.30 L83.0 209.64 L84.0 209.90 L85.0 210.08 L86.0 210.18 L87.0 210.20 L88.0 210.13 L89.0 209.98 L90.0 209.75 L91.0 209.45 L92.0 209.07 L93.0 208.63 L94.0 208.13 L95.0 207.57 L96.0 206.98 L97.0 206.36 L98.0 205.71 L99.0 205.05 L100.0 204.39 L101.0 203.74 L102.0 203.10 L103.0 202.50 L104.0 201.93 L105.0 201.42 L106.0 200.96 L107.0 200.56 L108.0 200.23 L109.0 199.98 L110.0 199.81 L111.0 199.72 L112.0 199.71 L113.0 199.78 L114.0 199.94 L115.0 200.18 L116.0 200.49 L117.0 200.87 L118.0 201.32 L119.0 201.83 L120.0 202.38 L121.0 202.98 L122.0 203.61 L123.0 204.26 L124.0 204.92 L125.0 205.58 L126.0 206.23 L127.0 206.86 L128.0 207.46 L129.0 208.02 L130.0 208.53 L131.0 208.99 L132.0 209.38 L133.0 209.70 L134.0 209.94 L135.0 210.11 L136.0 210.19 L137.0 210.19 L138.0 210.11 L139.0 209.94 L140.0 209.70 L141.0 209.38 L142.0 208.99 L143.0 208.53 L144.0 208.02 L145.0 207.46 L146.0 206.86 L147.0 206.23 L148.0 205.58 L149.0 204.92 L150.0 204.26 L151.0 203.61 L152.0 202.98 L153.0 202.38 L154.0 201.83 L155.0 201.32 L156.0 200.87 L157.0 200.49 L158.0 200.18 L159.0 199.94 L160.0 199.78 L161.0 199.71 L162.0 199.72 L163.0 199.81 L164.0 199.98 L165.0 200.23 L166.0 200.56 L167.0 200.96 L168.0 201.42 L169.0 201.93 L170.0 202.50 L171.0 203.10 L172.0 203.74 L173.0 204.39 L174.0 205.05 L175.0 205.71 L176.0 206.36 L177.0 206.98 L178.0 207.58 L179.0 208.13 L180.0 208.63 L181.0 209.07 L182.0 209.45 L183.0 209.75 L184.0 209.98 L185.0 210.13 L186.0 210.20 L187.0 210.18 L188.0 210.08 L189.0 209.90 L190.0 209.64 L191.0 209.30 L192.0 208.90 L193.0 208.43 L194.0 207.91 L195.0 207.34 L196.0 206.74 L197.0 206.10 L198.0 205.45 L199.0 204.78 L200.0 204.13 L201.0 203.48 L202.0 202.86 L203.0 202.27 L204.0 201.72 L205.0 201.23 L206.0 200.79 L207.0 200.42 L208.0 200.12 L209.0 199.90 L210.0 199.76 L211.0 199.70 L212.0 199.73 L213.0 199.83 L214.0 200.02 L215.0 200.29 L216.0 200.63 L217.0 201.04 L218.0 201.52 L219.0 202.04 L220.0 202.62 L221.0 203.23 L222.0 203.86 L223.0 204.52 L224.0 205.18 L225.0 205.84 L226.0 206.48 L227.0 207.10 L228.0 207.69 L229.0 208.23 L230.0 208.72 L231.0 209.15 L232.0 209.51 L233.0 209.80 L234.0 210.02 L235.0 210.15 L236.0 210.20 L237.0 210.17 L238.0 210.05 L239.0 209.85 L240.0 209.58 L241.0 209.23 L242.0 208.81 L243.0 208.33 L244.0 207.80 L245.0 207.22 L246.0 206.61 L247.0 205.97 L248.0 205.31 L249.0 204.65 L250.0 203.99 L251.0 203.35 L252.0 202.74 L253.0 202.15 L254.0 201.62 L255.0 201.13 L256.0 200.71 L257.0 200.35 L258.0 200.07 L259.0 199.87 L260.0 199.74 L261.0 199.70 L262.0 199.74 L263.0 199.87 L264.0 200.07 L265.0 200.35 L266.0 200.71 L267.0 201.13 L268.0 201.62 L269.0 202.15 L270.0 202.74 L271.0 203.35 L272.0 203.99 L273.0 204.65 L274.0 205.31 L275.0 205.97 L276.0 206.61 L277.0 207.22 L278.0 207.80 L279.0 208.33 L280.0 208.81 L281.0 209.23 L282.0 209.58 L283.0 209.85 L284.0 210.05 L285.0 210.17 L286.0 210.20 L287.0 210.15 L288.0 210.02 L289.0 209.80 L290.0 209.51 L291.0 209.15 L292.0 208.72 L293.0 208.23 L294.0 207.69 L295.0 207.10 L296.0 206.48 L297.0 205.84 L298.0 205.18 L299.0 204.52 L300.0 203.86 L301.0 203.23 L302.0 202.62 L303.0 202.04 L304.0 201.52 L305.0 201.04 L306.0 200.63 L307.0 200.29 L308.0 200.02 L309.0 199.83 L310.0 199.73 L311.0 199.70 L312.0 199.76 L313.0 199.90 L314.0 200.12 L315.0 200.42 L316.0 200.79 L317.0 201.23 L318.0 201.72 L319.0 202.27 L320.0 202.86 L321.0 203.48 L322.0 204.13 L323.0 204.78 L324.0 205.45 L325.0 206.10 L326.0 206.74 L327.0 207.34 L328.0 207.91 L329.0 208.43 L330.0 208.90 L331.0 209.30 L332.0 209.64 L333.0 209.90 L334.0 210.08 L335.0 210.18 L336.0 210.20 L337.0 210.13 L338.0 209.98 L339.0 209.75 L340.0 209.45 L341.0 209.07 L342.0 208.63 L343.0 208.13 L344.0 207.57 L345.0 206.98 L346.0 206.36 L347.0 205.71 L348.0 205.05 L349.0 204.39 L350.0 203.74 L351.0 203.10 L352.0 202.50 L353.0 201.93 L354.0 201.42 L355.0 200.96 L356.0 200.56 L357.0 200.23 L358.0 199.98 L359.0 199.81 L360.0 199.72 L361.0 199.71 L362.0 199.78 L363.0 199.94 L364.0 200.18 L365.0 200.49 L366.0 200.87 L367.0 201.32 L368.0 201.83 L369.0 202.38 L370.0 202.98 L371.0 203.61 L372.0 204.26 L373.0 204.92 L374.0 205.58 L375.0 206.23 L376.0 206.86 L377.0 207.46 L378.0 208.02 L379.0 208.53 L380.0 208.99 L381.0 209.38 L382.0 209.70 L383.0 209.94 L384.0 210.11 L385.0 210.19 L386.0 210.19 L387.0 210.11 L388.0 209.94 L389.0 209.70 L390.0 209.38 L391.0 208.99 L392.0 208.53 L393.0 208.02 L394.0 207.46 L395.0 206.86 L396.0 206.23 L397.0 205.58 L398.0 204.92 L399.0 204.26 L400.0 203.61 L401.0 202.98 L402.0 202.38 L403.0 201.83 L404.0 201.32 L405.0 200.87 L406.0 200.49 L407.0 200.18 L408.0 199.94 L409.0 199.78 L410.0 199.71 L411.0 199.72 L412.0 199.81 L413.0 199.98 L414.0 200.23 L415.0 200.56 L416.0 200.96 L417.0 201.42 L418.0 201.93 L419.0 202.50 L420.0 203.10 L421.0 203.74 L422.0 204.39 L423.0 205.05 L424.0 205.71 L425.0 206.36 L426.0 206.98 L427.0 207.57 L428.0 208.13 L429.0 208.63 L430.0 209.07 L431.0 209.45 L432.0 209.75 L433.0 209.98 L434.0 210.13 L435.0 210.20 L436.0 210.18 L437.0 210.08 L438.0 209.90 L439.0 209.64 L440.0 209.30 L441.0 208.90 L442.0 208.43 L443.0 207.91 L444.0 207.34 L445.0 206.74 L446.0 206.10 L447.0 205.45 L448.0 204.78 L449.0 204.13 L450.0 203.48 L451.0 202.86 L452.0 202.27 L453.0 201.72 L454.0 201.23 L455.0 200.79 L456.0 200.42 L457.0 200.12 L458.0 199.90 L459.0 199.76 L460.0 199.70 L461.0 199.73 L462.0 199.83 L463.0 200.02 L464.0 200.29 L465.0 200.63 L466.0 201.04 L467.0 201.52 L468.0 202.04 L469.0 202.62 L470.0 203.23 L471.0 203.86 L472.0 204.52 L473.0 205.18 L474.0 205.84 L475.0 206.48 L476.0 207.10 L477.0 207.69 L478.0 208.23 L479.0 208.72 L480.0 209.15 L481.0 209.51 L482.0 209.80 L483.0 210.02 L484.0 210.15 L485.0 210.20 L486.0 210.17 L487.0 210.05 L488.0 209.85 L489.0 209.58 L490.0 209.23 L491.0 208.81 L492.0 208.33 L493.0 207.80 L494.0 207.22 L495.0 206.61 L496.0 205.97 L497.0 205.31 L498.0 204.65 L499.0 203.99 L500.0 203.35 L501.0 202.74 L502.0 202.15 L503.0 201.62 L504.0 201.13 L505.0 200.71 L506.0 200.35 L507.0 200.07 L508.0 199.87 L509.0 199.74 L510.0 199.70 L511.0 199.74 L512.0 199.87 L513.0 200.07 L514.0 200.35 L515.0 200.71 L516.0 201.13 L517.0 201.62 L518.0 202.15 L519.0 202.74 L520.0 203.35 L521.0 203.99 L522.0 204.65 L523.0 205.31 L524.0 205.97 L525.0 206.61 L526.0 207.22 L527.0 207.80 L528.0 208.33 L529.0 208.81 L530.0 209.23 L531.0 209.58 L532.0 209.85 L533.0 210.05 L534.0 210.17 L535.0 210.20 L536.0 210.15 L537.0 210.02 L538.0 209.80 L539.0 209.51 L540.0 209.15 L541.0 208.72 L542.0 208.23 L543.0 207.69 L544.0 207.10 L545.0 206.48 L546.0 205.84 L547.0 205.18 L548.0 204.52 L549.0 203.86 L550.0 203.23 L551.0 202.62 L552.0 202.04 L553.0 201.52 L554.0 201.04 L555.0 200.63 L556.0 200.29 L557.0 200.02 L558.0 199.83 L559.0 199.73 L560.0 199.70 L561.0 199.76 L562.0 199.90 L563.0 200.12 L564.0 200.42 L565.0 200.79 L566.0 201.23 L567.0 201.72 L568.0 202.27 L569.0 202.86 L570.0 203.48 L571.0 204.13 L572.0 204.78 L573.0 205.45 L574.0 206.10 L575.0 206.74 L576.0 207.34 L577.0 207.91 L578.0 208.43 L579.0 208.90 L580.0 209.30 L581.0 209.64 L582.0 209.90 L583.0 210.08 L584.0 210.18 L585.0 210.20 L586.0 210.13 L587.0 209.98 L588.0 209.75 L589.0 209.45 L590.0 209.07 L591.0 208.63 L592.0 208.13 L593.0 207.57 L594.0 206.98 L595.0 206.36 L596.0 205.71 L597.0 205.05 L598.0 204.39 L599.0 203.74 L600.0 203.10 L601.0 202.50 L602.0 201.93 L603.0 201.42 L603.0 213.12 L602.0 213.63 L601.0 214.20 L600.0 214.80 L599.0 215.44 L598.0 216.09 L597.0 216.75 L596.0 217.41 L595.0 218.06 L594.0 218.68 L593.0 219.28 L592.0 219.83 L591.0 220.33 L590.0 220.77 L589.0 221.15 L588.0 221.45 L587.0 221.68 L586.0 221.83 L585.0 221.90 L584.0 221.88 L583.0 221.78 L582.0 221.60 L581.0 221.34 L580.0 221.00 L579.0 220.60 L578.0 220.13 L577.0 219.61 L576.0 219.04 L575.0 218.44 L574.0 217.80 L573.0 217.15 L572.0 216.48 L571.0 215.83 L570.0 215.18 L569.0 214.56 L568.0 213.97 L567.0 213.42 L566.0 212.93 L565.0 212.49 L564.0 212.12 L563.0 211.82 L562.0 211.60 L561.0 211.46 L560.0 211.40 L559.0 211.43 L558.0 211.53 L557.0 211.72 L556.0 211.99 L555.0 212.33 L554.0 212.74 L553.0 213.22 L552.0 213.74 L551.0 214.32 L550.0 214.93 L549.0 215.56 L548.0 216.22 L547.0 216.88 L546.0 217.54 L545.0 218.18 L544.0 218.80 L543.0 219.39 L542.0 219.93 L541.0 220.42 L540.0 220.85 L539.0 221.21 L538.0 221.50 L537.0 221.72 L536.0 221.85 L535.0 221.90 L534.0 221.87 L533.0 221.75 L532.0 221.55 L531.0 221.28 L530.0 220.93 L529.0 220.51 L528.0 220.03 L527.0 219.50 L526.0 218.92 L525.0 218.31 L524.0 217.67 L523.0 217.01 L522.0 216.35 L521.0 215.69 L520.0 215.05 L519.0 214.44 L518.0 213.85 L517.0 213.32 L516.0 212.83 L515.0 212.41 L514.0 212.05 L513.0 211.77 L512.0 211.57 L511.0 211.44 L510.0 211.40 L509.0 211.44 L508.0 211.57 L507.0 211.77 L506.0 212.05 L505.0 212.41 L504.0 212.83 L503.0 213.32 L502.0 213.85 L501.0 214.44 L500.0 215.05 L499.0 215.69 L498.0 216.35 L497.0 217.01 L496.0 217.67 L495.0 218.31 L494.0 218.92 L493.0 219.50 L492.0 220.03 L491.0 220.51 L490.0 220.93 L489.0 221.28 L488.0 221.55 L487.0 221.75 L486.0 221.87 L485.0 221.90 L484.0 221.85 L483.0 221.72 L482.0 221.50 L481.0 221.21 L480.0 220.85 L479.0 220.42 L478.0 219.93 L477.0 219.39 L476.0 218.80 L475.0 218.18 L474.0 217.54 L473.0 216.88 L472.0 216.22 L471.0 215.56 L470.0 214.93 L469.0 214.32 L468.0 213.74 L467.0 213.22 L466.0 212.74 L465.0 212.33 L464.0 211.99 L463.0 211.72 L462.0 211.53 L461.0 211.43 L460.0 211.40 L459.0 211.46 L458.0 211.60 L457.0 211.82 L456.0 212.12 L455.0 212.49 L454.0 212.93 L453.0 213.42 L452.0 213.97 L451.0 214.56 L450.0 215.18 L449.0 215.83 L448.0 216.48 L447.0 217.15 L446.0 217.80 L445.0 218.44 L444.0 219.04 L443.0 219.61 L442.0 220.13 L441.0 220.60 L440.0 221.00 L439.0 221.34 L438.0 221.60 L437.0 221.78 L436.0 221.88 L435.0 221.90 L434.0 221.83 L433.0 221.68 L432.0 221.45 L431.0 221.15 L430.0 220.77 L429.0 220.33 L428.0 219.83 L427.0 219.28 L426.0 218.68 L425.0 218.06 L424.0 217.41 L423.0 216.75 L422.0 216.09 L421.0 215.44 L420.0 214.80 L419.0 214.20 L418.0 213.63 L417.0 213.12 L416.0 212.66 L415.0 212.26 L414.0 211.93 L413.0 211.68 L412.0 211.51 L411.0 211.42 L410.0 211.41 L409.0 211.48 L408.0 211.64 L407.0 211.88 L406.0 212.19 L405.0 212.57 L404.0 213.02 L403.0 213.53 L402.0 214.08 L401.0 214.68 L400.0 215.31 L399.0 215.96 L398.0 216.62 L397.0 217.28 L396.0 217.93 L395.0 218.56 L394.0 219.16 L393.0 219.72 L392.0 220.23 L391.0 220.69 L390.0 221.08 L389.0 221.40 L388.0 221.64 L387.0 221.81 L386.0 221.89 L385.0 221.89 L384.0 221.81 L383.0 221.64 L382.0 221.40 L381.0 221.08 L380.0 220.69 L379.0 220.23 L378.0 219.72 L377.0 219.16 L376.0 218.56 L375.0 217.93 L374.0 217.28 L373.0 216.62 L372.0 215.96 L371.0 215.31 L370.0 214.68 L369.0 214.08 L368.0 213.53 L367.0 213.02 L366.0 212.57 L365.0 212.19 L364.0 211.88 L363.0 211.64 L362.0 211.48 L361.0 211.41 L360.0 211.42 L359.0 211.51 L358.0 211.68 L357.0 211.93 L356.0 212.26 L355.0 212.66 L354.0 213.12 L353.0 213.63 L352.0 214.20 L351.0 214.80 L350.0 215.44 L349.0 216.09 L348.0 216.75 L347.0 217.41 L346.0 218.06 L345.0 218.68 L344.0 219.27 L343.0 219.83 L342.0 220.33 L341.0 220.77 L340.0 221.15 L339.0 221.45 L338.0 221.68 L337.0 221.83 L336.0 221.90 L335.0 221.88 L334.0 221.78 L333.0 221.60 L332.0 221.34 L331.0 221.00 L330.0 220.60 L329.0 220.13 L328.0 219.61 L327.0 219.04 L326.0 218.44 L325.0 217.80 L324.0 217.15 L323.0 216.48 L322.0 215.83 L321.0 215.18 L320.0 214.56 L319.0 213.97 L318.0 213.42 L317.0 212.93 L316.0 212.49 L315.0 212.12 L314.0 211.82 L313.0 211.60 L312.0 211.46 L311.0 211.40 L310.0 211.43 L309.0 211.53 L308.0 211.72 L307.0 211.99 L306.0 212.33 L305.0 212.74 L304.0 213.22 L303.0 213.74 L302.0 214.32 L301.0 214.93 L300.0 215.56 L299.0 216.22 L298.0 216.88 L297.0 217.54 L296.0 218.18 L295.0 218.80 L294.0 219.39 L293.0 219.93 L292.0 220.42 L291.0 220.85 L290.0 221.21 L289.0 221.50 L288.0 221.72 L287.0 221.85 L286.0 221.90 L285.0 221.87 L284.0 221.75 L283.0 221.55 L282.0 221.28 L281.0 220.93 L280.0 220.51 L279.0 220.03 L278.0 219.50 L277.0 218.92 L276.0 218.31 L275.0 217.67 L274.0 217.01 L273.0 216.35 L272.0 215.69 L271.0 215.05 L270.0 214.44 L269.0 213.85 L268.0 213.32 L267.0 212.83 L266.0 212.41 L265.0 212.05 L264.0 211.77 L263.0 211.57 L262.0 211.44 L261.0 211.40 L260.0 211.44 L259.0 211.57 L258.0 211.77 L257.0 212.05 L256.0 212.41 L255.0 212.83 L254.0 213.32 L253.0 213.85 L252.0 214.44 L251.0 215.05 L250.0 215.69 L249.0 216.35 L248.0 217.01 L247.0 217.67 L246.0 218.31 L245.0 218.92 L244.0 219.50 L243.0 220.03 L242.0 220.51 L241.0 220.93 L240.0 221.28 L239.0 221.55 L238.0 221.75 L237.0 221.87 L236.0 221.90 L235.0 221.85 L234.0 221.72 L233.0 221.50 L232.0 221.21 L231.0 220.85 L230.0 220.42 L229.0 219.93 L228.0 219.39 L227.0 218.80 L226.0 218.18 L225.0 217.54 L224.0 216.88 L223.0 216.22 L222.0 215.56 L221.0 214.93 L220.0 214.32 L219.0 213.74 L218.0 213.22 L217.0 212.74 L216.0 212.33 L215.0 211.99 L214.0 211.72 L213.0 211.53 L212.0 211.43 L211.0 211.40 L210.0 211.46 L209.0 211.60 L208.0 211.82 L207.0 212.12 L206.0 212.49 L205.0 212.93 L204.0 213.42 L203.0 213.97 L202.0 214.56 L201.0 215.18 L200.0 215.83 L199.0 216.48 L198.0 217.15 L197.0 217.80 L196.0 218.44 L195.0 219.04 L194.0 219.61 L193.0 220.13 L192.0 220.60 L191.0 221.00 L190.0 221.34 L189.0 221.60 L188.0 221.78 L187.0 221.88 L186.0 221.90 L185.0 221.83 L184.0 221.68 L183.0 221.45 L182.0 221.15 L181.0 220.77 L180.0 220.33 L179.0 219.83 L178.0 219.28 L177.0 218.68 L176.0 218.06 L175.0 217.41 L174.0 216.75 L173.0 216.09 L172.0 215.44 L171.0 214.80 L170.0 214.20 L169.0 213.63 L168.0 213.12 L167.0 212.66 L166.0 212.26 L165.0 211.93 L164.0 211.68 L163.0 211.51 L162.0 211.42 L161.0 211.41 L160.0 211.48 L159.0 211.64 L158.0 211.88 L157.0 212.19 L156.0 212.57 L155.0 213.02 L154.0 213.53 L153.0 214.08 L152.0 214.68 L151.0 215.31 L150.0 215.96 L149.0 216.62 L148.0 217.28 L147.0 217.93 L146.0 218.56 L145.0 219.16 L144.0 219.72 L143.0 220.23 L142.0 220.69 L141.0 221.08 L140.0 221.40 L139.0 221.64 L138.0 221.81 L137.0 221.89 L136.0 221.89 L135.0 221.81 L134.0 221.64 L133.0 221.40 L132.0 221.08 L131.0 220.69 L130.0 220.23 L129.0 219.72 L128.0 219.16 L127.0 218.56 L126.0 217.93 L125.0 217.28 L124.0 216.62 L123.0 215.96 L122.0 215.31 L121.0 214.68 L120.0 214.08 L119.0 213.53 L118.0 213.02 L117.0 212.57 L116.0 212.19 L115.0 211.88 L114.0 211.64 L113.0 211.48 L112.0 211.41 L111.0 211.42 L110.0 211.51 L109.0 211.68 L108.0 211.93 L107.0 212.26 L106.0 212.66 L105.0 213.12 L104.0 213.63 L103.0 214.20 L102.0 214.80 L101.0 215.44 L100.0 216.09 L99.0 216.75 L98.0 217.41 L97.0 218.06 L96.0 218.68 L95.0 219.28 L94.0 219.83 L93.0 220.33 L92.0 220.77 L91.0 221.15 L90.0 221.45 L89.0 221.68 L88.0 221.83 L87.0 221.90 L86.0 221.88 L85.0 221.78 L84.0 221.60 L83.0 221.34 L82.0 221.00 L81.0 220.60 L80.0 220.13 L79.0 219.61 L78.0 219.04 L77.0 218.44 L76.0 217.80 L75.0 217.15 L74.0 216.48 L73.0 215.83 L72.0 215.18 L71.0 214.56 L70.0 213.97 L69.0 213.42 L68.0 212.93 L67.0 212.49 L66.0 212.12 L65.0 211.82 L64.0 211.60 L63.0 211.46 L62.0 211.40 L61.0 211.43 L60.0 211.53 L59.0 211.72 L58.0 211.99 L57.0 212.33 L56.0 212.74 L55.0 213.22 L54.0 213.74 L53.0 214.32 L52.0 214.93 L51.0 215.56 L50.0 216.22 L49.0 216.88 L48.0 217.54 L47.0 218.18 L46.0 218.80 L45.0 219.39 L44.0 219.93 L43.0 220.42 L42.0 220.85 L41.0 221.21 L40.0 221.50 L39.0 221.72 L38.0 221.85 L37.0 221.90 L36.0 221.87 L35.0 221.75 L34.0 221.55 L33.0 221.28 L32.0 220.93 L31.0 220.51 L30.0 220.03 L29.0 219.50 L28.0 218.92 L27.0 218.31 L26.0 217.67 L25.0 217.01 L24.0 216.35 L23.0 215.69 L22.0 215.05 L21.0 214.44 L20.0 213.85 L19.0 213.32 L18.0 212.83 L17.0 212.41 L16.0 212.05 L15.0 211.77 L14.0 211.57 L13.0 211.44 L12.0 211.40 L11.0 211.44 L10.0 211.57 L9.0 211.77 L8.0 212.05 L7.0 212.41 L6.0 212.83 L5.0 213.32 L4.0 213.85 L3.0 214.44 L2.0 215.05 L1.0 215.69 L0.0 216.35 L-1.0 217.01 L-2.0 217.67 L-3.0 218.31Z" fill="#ffffff"/>
<path d="M-3.0 206.61 L-2.0 205.97 L-1.0 205.31 L0.0 204.65 L1.0 203.99 L2.0 203.35 L3.0 202.74 L4.0 202.15 L5.0 201.62 L6.0 201.13 L7.0 200.71 L8.0 200.35 L9.0 200.07 L10.0 199.87 L11.0 199.74 L12.0 199.70 L13.0 199.74 L14.0 199.87 L15.0 200.07 L16.0 200.35 L17.0 200.71 L18.0 201.13 L19.0 201.62 L20.0 202.15 L21.0 202.74 L22.0 203.35 L23.0 203.99 L24.0 204.65 L25.0 205.31 L26.0 205.97 L27.0 206.61 L28.0 207.22 L29.0 207.80 L30.0 208.33 L31.0 208.81 L32.0 209.23 L33.0 209.58 L34.0 209.85 L35.0 210.05 L36.0 210.17 L37.0 210.20 L38.0 210.15 L39.0 210.02 L40.0 209.80 L41.0 209.51 L42.0 209.15 L43.0 208.72 L44.0 208.23 L45.0 207.69 L46.0 207.10 L47.0 206.48 L48.0 205.84 L49.0 205.18 L50.0 204.52 L51.0 203.86 L52.0 203.23 L53.0 202.62 L54.0 202.04 L55.0 201.52 L56.0 201.04 L57.0 200.63 L58.0 200.29 L59.0 200.02 L60.0 199.83 L61.0 199.73 L62.0 199.70 L63.0 199.76 L64.0 199.90 L65.0 200.12 L66.0 200.42 L67.0 200.79 L68.0 201.23 L69.0 201.72 L70.0 202.27 L71.0 202.86 L72.0 203.48 L73.0 204.13 L74.0 204.78 L75.0 205.45 L76.0 206.10 L77.0 206.74 L78.0 207.34 L79.0 207.91 L80.0 208.43 L81.0 208.90 L82.0 209.30 L83.0 209.64 L84.0 209.90 L85.0 210.08 L86.0 210.18 L87.0 210.20 L88.0 210.13 L89.0 209.98 L90.0 209.75 L91.0 209.45 L92.0 209.07 L93.0 208.63 L94.0 208.13 L95.0 207.57 L96.0 206.98 L97.0 206.36 L98.0 205.71 L99.0 205.05 L100.0 204.39 L101.0 203.74 L102.0 203.10 L103.0 202.50 L104.0 201.93 L105.0 201.42 L106.0 200.96 L107.0 200.56 L108.0 200.23 L109.0 199.98 L110.0 199.81 L111.0 199.72 L112.0 199.71 L113.0 199.78 L114.0 199.94 L115.0 200.18 L116.0 200.49 L117.0 200.87 L118.0 201.32 L119.0 201.83 L120.0 202.38 L121.0 202.98 L122.0 203.61 L123.0 204.26 L124.0 204.92 L125.0 205.58 L126.0 206.23 L127.0 206.86 L128.0 207.46 L129.0 208.02 L130.0 208.53 L131.0 208.99 L132.0 209.38 L133.0 209.70 L134.0 209.94 L135.0 210.11 L136.0 210.19 L137.0 210.19 L138.0 210.11 L139.0 209.94 L140.0 209.70 L141.0 209.38 L142.0 208.99 L143.0 208.53 L144.0 208.02 L145.0 207.46 L146.0 206.86 L147.0 206.23 L148.0 205.58 L149.0 204.92 L150.0 204.26 L151.0 203.61 L152.0 202.98 L153.0 202.38 L154.0 201.83 L155.0 201.32 L156.0 200.87 L157.0 200.49 L158.0 200.18 L159.0 199.94 L160.0 199.78 L161.0 199.71 L162.0 199.72 L163.0 199.81 L164.0 199.98 L165.0 200.23 L166.0 200.56 L167.0 200.96 L168.0 201.42 L169.0 201.93 L170.0 202.50 L171.0 203.10 L172.0 203.74 L173.0 204.39 L174.0 205.05 L175.0 205.71 L176.0 206.36 L177.0 206.98 L178.0 207.58 L179.0 208.13 L180.0 208.63 L181.0 209.07 L182.0 209.45 L183.0 209.75 L184.0 209.98 L185.0 210.13 L186.0 210.20 L187.0 210.18 L188.0 210.08 L189.0 209.90 L190.0 209.64 L191.0 209.30 L192.0 208.90 L193.0 208.43 L194.0 207.91 L195.0 207.34 L196.0 206.74 L197.0 206.10 L198.0 205.45 L199.0 204.78 L200.0 204.13 L201.0 203.48 L202.0 202.86 L203.0 202.27 L204.0 201.72 L205.0 201.23 L206.0 200.79 L207.0 200.42 L208.0 200.12 L209.0 199.90 L210.0 199.76 L211.0 199.70 L212.0 199.73 L213.0 199.83 L214.0 200.02 L215.0 200.29 L216.0 200.63 L217.0 201.04 L218.0 201.52 L219.0 202.04 L220.0 202.62 L221.0 203.23 L222.0 203.86 L223.0 204.52 L224.0 205.18 L225.0 205.84 L226.0 206.48 L227.0 207.10 L228.0 207.69 L229.0 208.23 L230.0 208.72 L231.0 209.15 L232.0 209.51 L233.0 209.80 L234.0 210.02 L235.0 210.15 L236.0 210.20 L237.0 210.17 L238.0 210.05 L239.0 209.85 L240.0 209.58 L241.0 209.23 L242.0 208.81 L243.0 208.33 L244.0 207.80 L245.0 207.22 L246.0 206.61 L247.0 205.97 L248.0 205.31 L249.0 204.65 L250.0 203.99 L251.0 203.35 L252.0 202.74 L253.0 202.15 L254.0 201.62 L255.0 201.13 L256.0 200.71 L257.0 200.35 L258.0 200.07 L259.0 199.87 L260.0 199.74 L261.0 199.70 L262.0 199.74 L263.0 199.87 L264.0 200.07 L265.0 200.35 L266.0 200.71 L267.0 201.13 L268.0 201.62 L269.0 202.15 L270.0 202.74 L271.0 203.35 L272.0 203.99 L273.0 204.65 L274.0 205.31 L275.0 205.97 L276.0 206.61 L277.0 207.22 L278.0 207.80 L279.0 208.33 L280.0 208.81 L281.0 209.23 L282.0 209.58 L283.0 209.85 L284.0 210.05 L285.0 210.17 L286.0 210.20 L287.0 210.15 L288.0 210.02 L289.0 209.80 L290.0 209.51 L291.0 209.15 L292.0 208.72 L293.0 208.23 L294.0 207.69 L295.0 207.10 L296.0 206.48 L297.0 205.84 L298.0 205.18 L299.0 204.52 L300.0 203.86 L301.0 203.23 L302.0 202.62 L303.0 202.04 L304.0 201.52 L305.0 201.04 L306.0 200.63 L307.0 200.29 L308.0 200.02 L309.0 199.83 L310.0 199.73 L311.0 199.70 L312.0 199.76 L313.0 199.90 L314.0 200.12 L315.0 200.42 L316.0 200.79 L317.0 201.23 L318.0 201.72 L319.0 202.27 L320.0 202.86 L321.0 203.48 L322.0 204.13 L323.0 204.78 L324.0 205.45 L325.0 206.10 L326.0 206.74 L327.0 207.34 L328.0 207.91 L329.0 208.43 L330.0 208.90 L331.0 209.30 L332.0 209.64 L333.0 209.90 L334.0 210.08 L335.0 210.18 L336.0 210.20 L337.0 210.13 L338.0 209.98 L339.0 209.75 L340.0 209.45 L341.0 209.07 L342.0 208.63 L343.0 208.13 L344.0 207.57 L345.0 206.98 L346.0 206.36 L347.0 205.71 L348.0 205.05 L349.0 204.39 L350.0 203.74 L351.0 203.10 L352.0 202.50 L353.0 201.93 L354.0 201.42 L355.0 200.96 L356.0 200.56 L357.0 200.23 L358.0 199.98 L359.0 199.81 L360.0 199.72 L361.0 199.71 L362.0 199.78 L363.0 199.94 L364.0 200.18 L365.0 200.49 L366.0 200.87 L367.0 201.32 L368.0 201.83 L369.0 202.38 L370.0 202.98 L371.0 203.61 L372.0 204.26 L373.0 204.92 L374.0 205.58 L375.0 206.23 L376.0 206.86 L377.0 207.46 L378.0 208.02 L379.0 208.53 L380.0 208.99 L381.0 209.38 L382.0 209.70 L383.0 209.94 L384.0 210.11 L385.0 210.19 L386.0 210.19 L387.0 210.11 L388.0 209.94 L389.0 209.70 L390.0 209.38 L391.0 208.99 L392.0 208.53 L393.0 208.02 L394.0 207.46 L395.0 206.86 L396.0 206.23 L397.0 205.58 L398.0 204.92 L399.0 204.26 L400.0 203.61 L401.0 202.98 L402.0 202.38 L403.0 201.83 L404.0 201.32 L405.0 200.87 L406.0 200.49 L407.0 200.18 L408.0 199.94 L409.0 199.78 L410.0 199.71 L411.0 199.72 L412.0 199.81 L413.0 199.98 L414.0 200.23 L415.0 200.56 L416.0 200.96 L417.0 201.42 L418.0 201.93 L419.0 202.50 L420.0 203.10 L421.0 203.74 L422.0 204.39 L423.0 205.05 L424.0 205.71 L425.0 206.36 L426.0 206.98 L427.0 207.57 L428.0 208.13 L429.0 208.63 L430.0 209.07 L431.0 209.45 L432.0 209.75 L433.0 209.98 L434.0 210.13 L435.0 210.20 L436.0 210.18 L437.0 210.08 L438.0 209.90 L439.0 209.64 L440.0 209.30 L441.0 208.90 L442.0 208.43 L443.0 207.91 L444.0 207.34 L445.0 206.74 L446.0 206.10 L447.0 205.45 L448.0 204.78 L449.0 204.13 L450.0 203.48 L451.0 202.86 L452.0 202.27 L453.0 201.72 L454.0 201.23 L455.0 200.79 L456.0 200.42 L457.0 200.12 L458.0 199.90 L459.0 199.76 L460.0 199.70 L461.0 199.73 L462.0 199.83 L463.0 200.02 L464.0 200.29 L465.0 200.63 L466.0 201.04 L467.0 201.52 L468.0 202.04 L469.0 202.62 L470.0 203.23 L471.0 203.86 L472.0 204.52 L473.0 205.18 L474.0 205.84 L475.0 206.48 L476.0 207.10 L477.0 207.69 L478.0 208.23 L479.0 208.72 L480.0 209.15 L481.0 209.51 L482.0 209.80 L483.0 210.02 L484.0 210.15 L485.0 210.20 L486.0 210.17 L487.0 210.05 L488.0 209.85 L489.0 209.58 L490.0 209.23 L491.0 208.81 L492.0 208.33 L493.0 207.80 L494.0 207.22 L495.0 206.61 L496.0 205.97 L497.0 205.31 L498.0 204.65 L499.0 203.99 L500.0 203.35 L501.0 202.74 L502.0 202.15 L503.0 201.62 L504.0 201.13 L505.0 200.71 L506.0 200.35 L507.0 200.07 L508.0 199.87 L509.0 199.74 L510.0 199.70 L511.0 199.74 L512.0 199.87 L513.0 200.07 L514.0 200.35 L515.0 200.71 L516.0 201.13 L517.0 201.62 L518.0 202.15 L519.0 202.74 L520.0 203.35 L521.0 203.99 L522.0 204.65 L523.0 205.31 L524.0 205.97 L525.0 206.61 L526.0 207.22 L527.0 207.80 L528.0 208.33 L529.0 208.81 L530.0 209.23 L531.0 209.58 L532.0 209.85 L533.0 210.05 L534.0 210.17 L535.0 210.20 L536.0 210.15 L537.0 210.02 L538.0 209.80 L539.0 209.51 L540.0 209.15 L541.0 208.72 L542.0 208.23 L543.0 207.69 L544.0 207.10 L545.0 206.48 L546.0 205.84 L547.0 205.18 L548.0 204.52 L549.0 203.86 L550.0 203.23 L551.0 202.62 L552.0 202.04 L553.0 201.52 L554.0 201.04 L555.0 200.63 L556.0 200.29 L557.0 200.02 L558.0 199.83 L559.0 199.73 L560.0 199.70 L561.0 199.76 L562.0 199.90 L563.0 200.12 L564.0 200.42 L565.0 200.79 L566.0 201.23 L567.0 201.72 L568.0 202.27 L569.0 202.86 L570.0 203.48 L571.0 204.13 L572.0 204.78 L573.0 205.45 L574.0 206.10 L575.0 206.74 L576.0 207.34 L577.0 207.91 L578.0 208.43 L579.0 208.90 L580.0 209.30 L581.0 209.64 L582.0 209.90 L583.0 210.08 L584.0 210.18 L585.0 210.20 L586.0 210.13 L587.0 209.98 L588.0 209.75 L589.0 209.45 L590.0 209.07 L591.0 208.63 L592.0 208.13 L593.0 207.57 L594.0 206.98 L595.0 206.36 L596.0 205.71 L597.0 205.05 L598.0 204.39 L599.0 203.74 L600.0 203.10 L601.0 202.50 L602.0 201.93 L603.0 201.42" fill="none" stroke="#000" stroke-width="1.9"/>
<path d="M-3.0 218.31 L-2.0 217.67 L-1.0 217.01 L0.0 216.35 L1.0 215.69 L2.0 215.05 L3.0 214.44 L4.0 213.85 L5.0 213.32 L6.0 212.83 L7.0 212.41 L8.0 212.05 L9.0 211.77 L10.0 211.57 L11.0 211.44 L12.0 211.40 L13.0 211.44 L14.0 211.57 L15.0 211.77 L16.0 212.05 L17.0 212.41 L18.0 212.83 L19.0 213.32 L20.0 213.85 L21.0 214.44 L22.0 215.05 L23.0 215.69 L24.0 216.35 L25.0 217.01 L26.0 217.67 L27.0 218.31 L28.0 218.92 L29.0 219.50 L30.0 220.03 L31.0 220.51 L32.0 220.93 L33.0 221.28 L34.0 221.55 L35.0 221.75 L36.0 221.87 L37.0 221.90 L38.0 221.85 L39.0 221.72 L40.0 221.50 L41.0 221.21 L42.0 220.85 L43.0 220.42 L44.0 219.93 L45.0 219.39 L46.0 218.80 L47.0 218.18 L48.0 217.54 L49.0 216.88 L50.0 216.22 L51.0 215.56 L52.0 214.93 L53.0 214.32 L54.0 213.74 L55.0 213.22 L56.0 212.74 L57.0 212.33 L58.0 211.99 L59.0 211.72 L60.0 211.53 L61.0 211.43 L62.0 211.40 L63.0 211.46 L64.0 211.60 L65.0 211.82 L66.0 212.12 L67.0 212.49 L68.0 212.93 L69.0 213.42 L70.0 213.97 L71.0 214.56 L72.0 215.18 L73.0 215.83 L74.0 216.48 L75.0 217.15 L76.0 217.80 L77.0 218.44 L78.0 219.04 L79.0 219.61 L80.0 220.13 L81.0 220.60 L82.0 221.00 L83.0 221.34 L84.0 221.60 L85.0 221.78 L86.0 221.88 L87.0 221.90 L88.0 221.83 L89.0 221.68 L90.0 221.45 L91.0 221.15 L92.0 220.77 L93.0 220.33 L94.0 219.83 L95.0 219.28 L96.0 218.68 L97.0 218.06 L98.0 217.41 L99.0 216.75 L100.0 216.09 L101.0 215.44 L102.0 214.80 L103.0 214.20 L104.0 213.63 L105.0 213.12 L106.0 212.66 L107.0 212.26 L108.0 211.93 L109.0 211.68 L110.0 211.51 L111.0 211.42 L112.0 211.41 L113.0 211.48 L114.0 211.64 L115.0 211.88 L116.0 212.19 L117.0 212.57 L118.0 213.02 L119.0 213.53 L120.0 214.08 L121.0 214.68 L122.0 215.31 L123.0 215.96 L124.0 216.62 L125.0 217.28 L126.0 217.93 L127.0 218.56 L128.0 219.16 L129.0 219.72 L130.0 220.23 L131.0 220.69 L132.0 221.08 L133.0 221.40 L134.0 221.64 L135.0 221.81 L136.0 221.89 L137.0 221.89 L138.0 221.81 L139.0 221.64 L140.0 221.40 L141.0 221.08 L142.0 220.69 L143.0 220.23 L144.0 219.72 L145.0 219.16 L146.0 218.56 L147.0 217.93 L148.0 217.28 L149.0 216.62 L150.0 215.96 L151.0 215.31 L152.0 214.68 L153.0 214.08 L154.0 213.53 L155.0 213.02 L156.0 212.57 L157.0 212.19 L158.0 211.88 L159.0 211.64 L160.0 211.48 L161.0 211.41 L162.0 211.42 L163.0 211.51 L164.0 211.68 L165.0 211.93 L166.0 212.26 L167.0 212.66 L168.0 213.12 L169.0 213.63 L170.0 214.20 L171.0 214.80 L172.0 215.44 L173.0 216.09 L174.0 216.75 L175.0 217.41 L176.0 218.06 L177.0 218.68 L178.0 219.28 L179.0 219.83 L180.0 220.33 L181.0 220.77 L182.0 221.15 L183.0 221.45 L184.0 221.68 L185.0 221.83 L186.0 221.90 L187.0 221.88 L188.0 221.78 L189.0 221.60 L190.0 221.34 L191.0 221.00 L192.0 220.60 L193.0 220.13 L194.0 219.61 L195.0 219.04 L196.0 218.44 L197.0 217.80 L198.0 217.15 L199.0 216.48 L200.0 215.83 L201.0 215.18 L202.0 214.56 L203.0 213.97 L204.0 213.42 L205.0 212.93 L206.0 212.49 L207.0 212.12 L208.0 211.82 L209.0 211.60 L210.0 211.46 L211.0 211.40 L212.0 211.43 L213.0 211.53 L214.0 211.72 L215.0 211.99 L216.0 212.33 L217.0 212.74 L218.0 213.22 L219.0 213.74 L220.0 214.32 L221.0 214.93 L222.0 215.56 L223.0 216.22 L224.0 216.88 L225.0 217.54 L226.0 218.18 L227.0 218.80 L228.0 219.39 L229.0 219.93 L230.0 220.42 L231.0 220.85 L232.0 221.21 L233.0 221.50 L234.0 221.72 L235.0 221.85 L236.0 221.90 L237.0 221.87 L238.0 221.75 L239.0 221.55 L240.0 221.28 L241.0 220.93 L242.0 220.51 L243.0 220.03 L244.0 219.50 L245.0 218.92 L246.0 218.31 L247.0 217.67 L248.0 217.01 L249.0 216.35 L250.0 215.69 L251.0 215.05 L252.0 214.44 L253.0 213.85 L254.0 213.32 L255.0 212.83 L256.0 212.41 L257.0 212.05 L258.0 211.77 L259.0 211.57 L260.0 211.44 L261.0 211.40 L262.0 211.44 L263.0 211.57 L264.0 211.77 L265.0 212.05 L266.0 212.41 L267.0 212.83 L268.0 213.32 L269.0 213.85 L270.0 214.44 L271.0 215.05 L272.0 215.69 L273.0 216.35 L274.0 217.01 L275.0 217.67 L276.0 218.31 L277.0 218.92 L278.0 219.50 L279.0 220.03 L280.0 220.51 L281.0 220.93 L282.0 221.28 L283.0 221.55 L284.0 221.75 L285.0 221.87 L286.0 221.90 L287.0 221.85 L288.0 221.72 L289.0 221.50 L290.0 221.21 L291.0 220.85 L292.0 220.42 L293.0 219.93 L294.0 219.39 L295.0 218.80 L296.0 218.18 L297.0 217.54 L298.0 216.88 L299.0 216.22 L300.0 215.56 L301.0 214.93 L302.0 214.32 L303.0 213.74 L304.0 213.22 L305.0 212.74 L306.0 212.33 L307.0 211.99 L308.0 211.72 L309.0 211.53 L310.0 211.43 L311.0 211.40 L312.0 211.46 L313.0 211.60 L314.0 211.82 L315.0 212.12 L316.0 212.49 L317.0 212.93 L318.0 213.42 L319.0 213.97 L320.0 214.56 L321.0 215.18 L322.0 215.83 L323.0 216.48 L324.0 217.15 L325.0 217.80 L326.0 218.44 L327.0 219.04 L328.0 219.61 L329.0 220.13 L330.0 220.60 L331.0 221.00 L332.0 221.34 L333.0 221.60 L334.0 221.78 L335.0 221.88 L336.0 221.90 L337.0 221.83 L338.0 221.68 L339.0 221.45 L340.0 221.15 L341.0 220.77 L342.0 220.33 L343.0 219.83 L344.0 219.27 L345.0 218.68 L346.0 218.06 L347.0 217.41 L348.0 216.75 L349.0 216.09 L350.0 215.44 L351.0 214.80 L352.0 214.20 L353.0 213.63 L354.0 213.12 L355.0 212.66 L356.0 212.26 L357.0 211.93 L358.0 211.68 L359.0 211.51 L360.0 211.42 L361.0 211.41 L362.0 211.48 L363.0 211.64 L364.0 211.88 L365.0 212.19 L366.0 212.57 L367.0 213.02 L368.0 213.53 L369.0 214.08 L370.0 214.68 L371.0 215.31 L372.0 215.96 L373.0 216.62 L374.0 217.28 L375.0 217.93 L376.0 218.56 L377.0 219.16 L378.0 219.72 L379.0 220.23 L380.0 220.69 L381.0 221.08 L382.0 221.40 L383.0 221.64 L384.0 221.81 L385.0 221.89 L386.0 221.89 L387.0 221.81 L388.0 221.64 L389.0 221.40 L390.0 221.08 L391.0 220.69 L392.0 220.23 L393.0 219.72 L394.0 219.16 L395.0 218.56 L396.0 217.93 L397.0 217.28 L398.0 216.62 L399.0 215.96 L400.0 215.31 L401.0 214.68 L402.0 214.08 L403.0 213.53 L404.0 213.02 L405.0 212.57 L406.0 212.19 L407.0 211.88 L408.0 211.64 L409.0 211.48 L410.0 211.41 L411.0 211.42 L412.0 211.51 L413.0 211.68 L414.0 211.93 L415.0 212.26 L416.0 212.66 L417.0 213.12 L418.0 213.63 L419.0 214.20 L420.0 214.80 L421.0 215.44 L422.0 216.09 L423.0 216.75 L424.0 217.41 L425.0 218.06 L426.0 218.68 L427.0 219.28 L428.0 219.83 L429.0 220.33 L430.0 220.77 L431.0 221.15 L432.0 221.45 L433.0 221.68 L434.0 221.83 L435.0 221.90 L436.0 221.88 L437.0 221.78 L438.0 221.60 L439.0 221.34 L440.0 221.00 L441.0 220.60 L442.0 220.13 L443.0 219.61 L444.0 219.04 L445.0 218.44 L446.0 217.80 L447.0 217.15 L448.0 216.48 L449.0 215.83 L450.0 215.18 L451.0 214.56 L452.0 213.97 L453.0 213.42 L454.0 212.93 L455.0 212.49 L456.0 212.12 L457.0 211.82 L458.0 211.60 L459.0 211.46 L460.0 211.40 L461.0 211.43 L462.0 211.53 L463.0 211.72 L464.0 211.99 L465.0 212.33 L466.0 212.74 L467.0 213.22 L468.0 213.74 L469.0 214.32 L470.0 214.93 L471.0 215.56 L472.0 216.22 L473.0 216.88 L474.0 217.54 L475.0 218.18 L476.0 218.80 L477.0 219.39 L478.0 219.93 L479.0 220.42 L480.0 220.85 L481.0 221.21 L482.0 221.50 L483.0 221.72 L484.0 221.85 L485.0 221.90 L486.0 221.87 L487.0 221.75 L488.0 221.55 L489.0 221.28 L490.0 220.93 L491.0 220.51 L492.0 220.03 L493.0 219.50 L494.0 218.92 L495.0 218.31 L496.0 217.67 L497.0 217.01 L498.0 216.35 L499.0 215.69 L500.0 215.05 L501.0 214.44 L502.0 213.85 L503.0 213.32 L504.0 212.83 L505.0 212.41 L506.0 212.05 L507.0 211.77 L508.0 211.57 L509.0 211.44 L510.0 211.40 L511.0 211.44 L512.0 211.57 L513.0 211.77 L514.0 212.05 L515.0 212.41 L516.0 212.83 L517.0 213.32 L518.0 213.85 L519.0 214.44 L520.0 215.05 L521.0 215.69 L522.0 216.35 L523.0 217.01 L524.0 217.67 L525.0 218.31 L526.0 218.92 L527.0 219.50 L528.0 220.03 L529.0 220.51 L530.0 220.93 L531.0 221.28 L532.0 221.55 L533.0 221.75 L534.0 221.87 L535.0 221.90 L536.0 221.85 L537.0 221.72 L538.0 221.50 L539.0 221.21 L540.0 220.85 L541.0 220.42 L542.0 219.93 L543.0 219.39 L544.0 218.80 L545.0 218.18 L546.0 217.54 L547.0 216.88 L548.0 216.22 L549.0 215.56 L550.0 214.93 L551.0 214.32 L552.0 213.74 L553.0 213.22 L554.0 212.74 L555.0 212.33 L556.0 211.99 L557.0 211.72 L558.0 211.53 L559.0 211.43 L560.0 211.40 L561.0 211.46 L562.0 211.60 L563.0 211.82 L564.0 212.12 L565.0 212.49 L566.0 212.93 L567.0 213.42 L568.0 213.97 L569.0 214.56 L570.0 215.18 L571.0 215.83 L572.0 216.48 L573.0 217.15 L574.0 217.80 L575.0 218.44 L576.0 219.04 L577.0 219.61 L578.0 220.13 L579.0 220.60 L580.0 221.00 L581.0 221.34 L582.0 221.60 L583.0 221.78 L584.0 221.88 L585.0 221.90 L586.0 221.83 L587.0 221.68 L588.0 221.45 L589.0 221.15 L590.0 220.77 L591.0 220.33 L592.0 219.83 L593.0 219.28 L594.0 218.68 L595.0 218.06 L596.0 217.41 L597.0 216.75 L598.0 216.09 L599.0 215.44 L600.0 214.80 L601.0 214.20 L602.0 213.63 L603.0 213.12" fill="none" stroke="#000" stroke-width="1.9"/>
</svg>
</div>
</body></html>
